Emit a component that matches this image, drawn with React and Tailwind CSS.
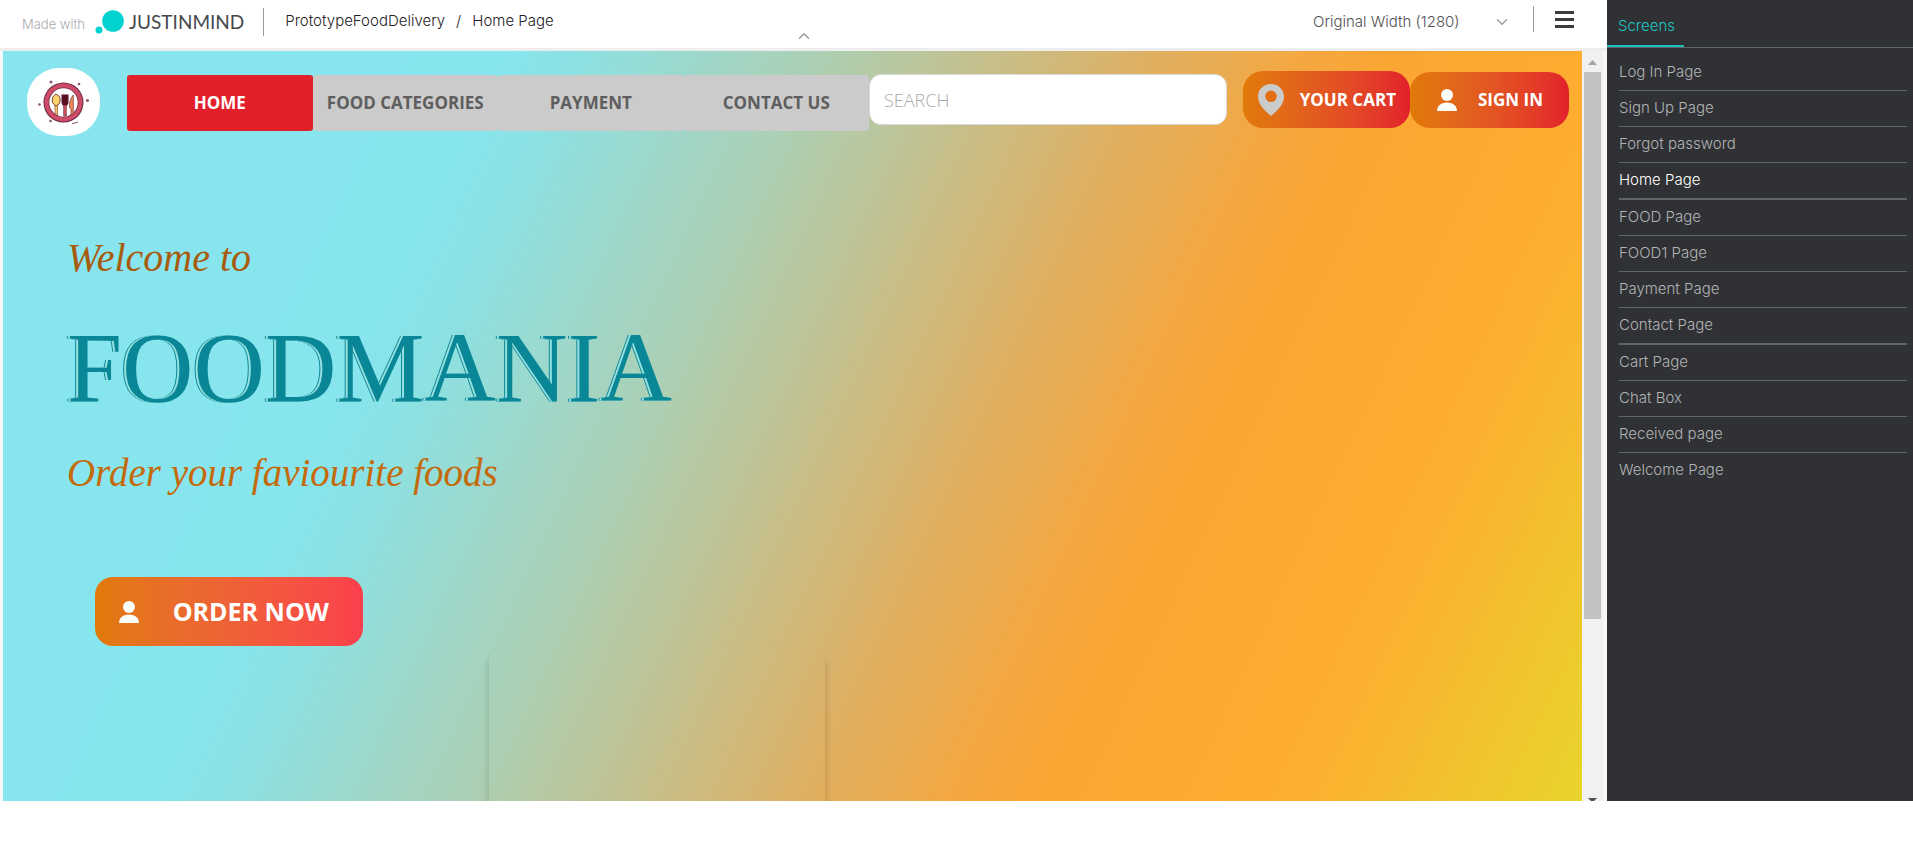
import { ChevronUp, ChevronDown } from "lucide-react";

const screens = [
  "Log In Page",
  "Sign Up Page",
  "Forgot password",
  "Home Page",
  "FOOD Page",
  "FOOD1 Page",
  "Payment Page",
  "Contact Page",
  "Cart Page",
  "Chat Box",
  "Received page",
  "Welcome Page",
];

function UserIcon() {
  return (
    <svg viewBox="0 0 20 22" className="h-[22px] w-5 shrink-0" fill="currentColor" aria-hidden="true">
      <circle cx="10" cy="6" r="6" />
      <path d="M0 22c0-5 4-8.500 10-8.500S20 17 20 22z" />
    </svg>
  );
}

function PinIcon() {
  return (
    <svg viewBox="0 0 26 32" className="h-8 w-[26px] shrink-0" fill="#cbcbcb" aria-hidden="true">
      <path
        fillRule="evenodd"
        d="M13 0C5.800 0 0 5.500 0 12.500 0 20 6 26 13 32c7-6 13-12 13-19.500C26 5.500 20.200 0 13 0zm0 6.500a5.800 5.800 0 1 1 0 11.600A5.800 5.800 0 0 1 13 6.500z"
      />
    </svg>
  );
}

function PlateLogo() {
  return (
    <svg viewBox="0 0 73 68" className="h-[68px] w-[73px]" aria-hidden="true">
      <circle cx="36.500" cy="34.500" r="20" fill="#6d2b42" />
      <circle cx="36.500" cy="34.500" r="19" fill="#cf4c68" />
      <circle cx="36.500" cy="34.500" r="15" fill="#6d2b42" />
      <circle cx="36.500" cy="34.500" r="14.200" fill="#fff" />
      <path d="M28 36h2.500v11.500L28 46z" fill="#f6c55a" stroke="#7a3a3a" strokeWidth="0.600" />
      <ellipse cx="29.200" cy="32" rx="4" ry="5.500" fill="#fbd26b" stroke="#6b3636" strokeWidth="0.900" />
      <path d="M34.500 26.500h7V34c0 2.500-1.500 4-3.500 4s-3.500-1.500-3.500-4z" fill="#5c1024" />
      <path d="M36.700 37h2.600v11h-2.600z" fill="#d9556a" stroke="#5c1024" strokeWidth="0.600" />
      <path d="M46.300 27c-2.800 3-4.300 8-3.600 13l1.300 1v6l2.300-1.500z" fill="#f58a55" stroke="#6b3636" strokeWidth="0.700" />
      <g fill="#8e5568">
        <circle cx="24" cy="14" r="1.500" />
        <circle cx="52" cy="16" r="1.300" />
        <circle cx="60.500" cy="32.500" r="1.500" />
        <circle cx="12.500" cy="36.500" r="1.300" />
        <circle cx="23.500" cy="53" r="1.300" />
      </g>
      <path d="M45 55.500q3 0 6-1.500" stroke="#8e5568" fill="none" />
    </svg>
  );
}

function Header() {
  return (
    <header className="relative flex h-[51px] items-start justify-between border-b-[3px] border-[#eeeeee] bg-white pr-[33px] pl-[22px]">
      <div className="flex h-11 items-center">
        <span className="pt-[6px] text-[13px] font-light text-[#a9a9ab]">Made with</span>
        <a href="#justinmind" className="ml-[10px] flex items-center gap-1 text-[#47484c]">
          <svg viewBox="0 0 30 24" className="h-6 w-[30px]" fill="#00d2cf" aria-hidden="true">
            <circle cx="18" cy="11" r="10.800" />
            <circle cx="4" cy="20" r="3.500" />
          </svg>
          <span className="font-['Lato'] text-[19px]">JUSTINMIND</span>
        </a>
        <span className="ml-[19px] h-7 w-px bg-[#9b9b9b]" />
        <nav className="mb-[2px] ml-[21px] flex gap-[11px] text-[15px] font-light text-[#1f2023]" aria-label="Breadcrumb">
          <a href="#project">PrototypeFoodDelivery</a>
          <span>/</span>
          <a href="#home">Home Page</a>
        </nav>
      </div>
      <button type="button" aria-label="Collapse header" className="absolute bottom-0 left-1/2 flex h-6 w-6 -translate-x-1/2 items-center justify-center text-[#9a9a9a]">
        <ChevronUp size={18} strokeWidth={2} />
      </button>
      <div className="flex h-11 items-center">
        <div className="relative flex items-center">
          <select aria-label="Canvas width" className="w-[198px] appearance-none bg-transparent text-[15px] font-light text-[#4f5054]">
            <option>Original Width (1280)</option>
          </select>
          <ChevronDown size={18} className="pointer-events-none absolute right-0 text-[#a0a0a0]" />
        </div>
        <span className="mb-[6px] ml-[22px] h-[26px] w-px bg-[#9b9b9b]" />
        <button type="button" aria-label="Menu" className="mb-[5px] ml-[21px] flex flex-col gap-1">
          <span className="h-[3px] w-[19px] bg-[#3c3c3e]" />
          <span className="h-[3px] w-[19px] bg-[#3c3c3e]" />
          <span className="h-[3px] w-[19px] bg-[#3c3c3e]" />
        </button>
      </div>
    </header>
  );
}

function TopBar() {
  const tab = "flex flex-1 items-center justify-center whitespace-nowrap rounded-[3px]";
  return (
    <div className="flex items-start pr-[13px] pl-6">
      <a href="#home" aria-label="Foodmania" className="mt-[17px] overflow-hidden rounded-[32px] bg-white">
        <PlateLogo />
      </a>
      <nav className="mt-6 ml-[27px] flex h-14 w-[742px] text-[17px] font-bold text-[#5e5e5e]">
        <a href="#home" className={`${tab} bg-[#e2202b] text-white`}>HOME</a>
        <a href="#food" className={`${tab} bg-[#cbcbcb]`}>FOOD CATEGORIES</a>
        <a href="#payment" className={`${tab} bg-[#cbcbcb]`}>PAYMENT</a>
        <a href="#contact" className={`${tab} bg-[#cbcbcb]`}>CONTACT US</a>
      </nav>
      <input
        type="search"
        aria-label="Search"
        placeholder="SEARCH"
        className="mt-[23px] h-[51px] min-w-0 flex-1 rounded-xl border border-[#d9d9d9] bg-white px-[14px] text-[18px] font-light placeholder:text-[#a9a9a9]"
      />
      <button type="button" className="mt-5 ml-4 flex h-[57px] w-[167px] items-center justify-between rounded-[20px] bg-linear-to-r from-[#e17a08] to-[#e2202b] pr-[14px] pl-[15px] text-[17px] font-bold text-white">
        <PinIcon />
        YOUR CART
      </button>
      <button type="button" className="mt-[21px] flex h-14 w-[159px] items-center justify-between rounded-[20px] bg-linear-to-r from-[#e17a08] to-[#e2202b] pr-[26px] pl-[27px] text-[17px] font-bold text-white">
        <UserIcon />
        SIGN IN
      </button>
    </div>
  );
}

function Scrollbar() {
  return (
    <div className="flex w-[21px] shrink-0 flex-col items-center bg-[#f1f1f1]" aria-hidden="true">
      <svg viewBox="0 0 21 21" className="h-[21px] w-[21px] shrink-0" fill="#a3a3a3">
        <path d="M6 14h9l-4.500-5z" />
      </svg>
      <div className="w-[17px] flex-[547] bg-[#c1c1c1]" />
      <div className="flex-[179]" />
      <svg viewBox="0 0 9 3" className="h-[3px] w-[9px] shrink-0" fill="#505050">
        <path d="M0 0h9L6 3H3z" />
      </svg>
    </div>
  );
}

function Canvas() {
  return (
    <main className="flex min-w-0 flex-1 flex-col overflow-hidden bg-[linear-gradient(115deg,#88e5ef_0%,#87e5ee_26%,#8ce1e2_30%,#9dd8cc_36%,#abd0b5_42%,#b9c79f_47%,#c8be88_52%,#e0af60_60%,#f3a843_67%,#fba633_72%,#fca930_78%,#fdaf30_85%,#f5bd30_91%,#e8d52c_100%)] font-['Open_Sans',sans-serif]">
      <TopBar />
      <section className="flex flex-col items-start pl-16">
        <p className="mt-[92px] font-['Liberation_Serif',serif] text-[40px] leading-[60px] text-[#a85b0c] italic">Welcome to</p>
        <h1 className="mt-6 font-['Liberation_Serif',serif] text-[99px] leading-[112px] text-[#0a8796] [text-shadow:-2px_0_0_#96e0e0,-3px_0_0_#0a8796]">FOODMANIA</h1>
        <p className="mt-[19px] font-['Liberation_Serif',serif] text-[39px] leading-[60px] text-[#c56a0a] italic">Order your faviourite foods</p>
        <button type="button" className="mt-[74px] ml-7 flex h-[69px] w-[268px] items-center justify-between rounded-[18px] bg-linear-to-r from-[#e17a08] to-[#fb3f4c] pr-[34px] pl-6 text-[25px] font-bold text-white">
          <UserIcon />
          ORDER NOW
        </button>
      </section>
      <article aria-label="Featured food" className="ml-[486px] h-[155px] w-[336px] rounded-t-[16px] shadow-[0_6px_7px_rgba(0,0,0,0.2)]" />
    </main>
  );
}

function Sidebar() {
  return (
    <aside className="w-[306px] shrink-0 bg-[#303134]">
      <div className="flex h-12 items-end border-b border-[#5f6466]">
        <button type="button" className="h-[47px] w-[77px] border-b-2 border-[#1fbfbf] pt-2 pl-[11px] text-left text-[15px] font-light text-[#1fc5c3]">
          Screens
        </button>
      </div>
      <ul className="mt-[7px] mr-[6px] ml-3 text-[15px] font-light">
        {screens.map((name, i) => {
          const line = i === screens.length - 1 ? "" : i % 4 === 3 ? "border-b-2" : "border-b";
          const color = name === "Home Page" ? "text-white" : "text-[#b1b3b4]";
          return (
            <li key={name} className={`border-[#5f6466] ${line}`}>
              <a href="#screen" className={`block h-[35px] leading-[34px] ${color}`}>{name}</a>
            </li>
          );
        })}
      </ul>
    </aside>
  );
}

export default function App() {
  return (
    <div className="min-h-screen bg-white font-['Inter',sans-serif]">
      <div className="flex">
        <div className="flex min-w-0 flex-1 flex-col">
          <Header />
          <div className="flex flex-1 bg-[#f7f8f9] pr-1 pl-[3px]">
            <Canvas />
            <Scrollbar />
          </div>
        </div>
        <Sidebar />
      </div>
    </div>
  );
}
